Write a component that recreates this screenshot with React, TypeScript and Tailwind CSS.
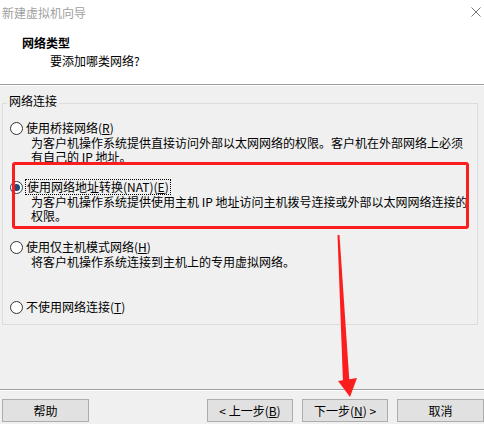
import React from "react"

const font = { fontFamily: '"Noto Sans CJK SC", "Microsoft YaHei", sans-serif' }

const Radio = ({ checked = false }: { checked?: boolean }) => (
  <svg width="13" height="13" viewBox="0 0 13 13" className="shrink-0">
    <circle cx="6.5" cy="6.5" r="6" fill="#ffffff" stroke={checked ? "#2a3d52" : "#333333"} strokeWidth="1" />
    {checked && <circle cx="6.5" cy="6.5" r="3.5" fill="#1e4d78" />}
  </svg>
)

const Option = ({
  label,
  lines = [],
  checked = false,
  focused = false,
  className = "",
}: {
  label: React.ReactNode
  lines?: string[]
  checked?: boolean
  focused?: boolean
  className?: string
}) => (
  <div className={className}>
    <div className="flex items-center h-[16px] pl-[7px]">
      <Radio checked={checked} />
      <span
        className={
          focused
            ? "ml-[2px] px-[1px] leading-[14px] border border-dotted border-black"
            : "ml-[3px] leading-[16px]"
        }
      >
        {label}
      </span>
    </div>
    {lines.map((l) => (
      <div key={l} className="pl-[28px] leading-[14px] whitespace-nowrap">
        {l}
      </div>
    ))}
  </div>
)

const Btn = ({ children, className = "" }: { children: React.ReactNode; className?: string }) => (
  <div
    className={`h-[23px] flex items-center justify-center bg-[#e1e1e1] border border-[#adadad] text-[12px] text-black ${className}`}
  >
    {children}
  </div>
)

export default function App() {
  return (
    <div className="relative w-[484px] h-[424px] bg-[#f0f0f0] overflow-hidden text-[12px] text-black" style={font}>
      {/* header */}
      <div className="h-[85px] bg-white border-b border-[#a0a0a0]">
        <div className="flex justify-between items-start pt-[6px] pl-[2px] pr-[3px]">
          <span className="leading-[14px] text-[#a0a0a0]">新建虚拟机向导</span>
          <svg width="10" height="10" viewBox="0 0 10 10" className="mt-[1px]">
            <path d="M0.5 0.5L9.5 9.5M9.5 0.5L0.5 9.5" stroke="#777" strokeWidth="1" />
          </svg>
        </div>
        <div className="mt-[16px] pl-[22px] leading-[14px] font-bold">网络类型</div>
        <div className="mt-[4px] pl-[50px] leading-[14px]">要添加哪类网络?</div>
      </div>
      <div className="h-px bg-white" />

      {/* group */}
      <fieldset className="mt-[8px] ml-[2px] w-[476px] h-[231px] border border-[#dcdcdc]">
        <legend className="ml-[4px] px-[2px] leading-[14px] pb-[4px]">网络连接</legend>
        <Option
          className="mt-[8px]"
          label={
            <>
              使用桥接网络(<span className="underline">R</span>)
            </>
          }
          lines={["为客户机操作系统提供直接访问外部以太网网络的权限。客户机在外部网络上必须", "有自己的 IP 地址。"]}
        />
        <Option
          className="mt-[15px]"
          checked
          focused
          label={
            <>
              使用网络地址转换(NAT)(<span className="underline">E</span>)
            </>
          }
          lines={["为客户机操作系统提供使用主机 IP 地址访问主机拨号连接或外部以太网网络连接的", "权限。"]}
        />
        <Option
          className="mt-[16px]"
          label={
            <>
              使用仅主机模式网络(<span className="underline">H</span>)
            </>
          }
          lines={["将客户机操作系统连接到主机上的专用虚拟网络。"]}
        />
        <Option
          className="mt-[30px]"
          label={
            <>
              不使用网络连接(<span className="underline">T</span>)
            </>
          }
        />
      </fieldset>

      {/* footer */}
      <div className="mt-[64px] border-t border-[#a0a0a0] border-b border-b-white" />
      <div className="mt-[8px] flex pl-[2px]">
        <Btn className="w-[87px]">帮助</Btn>
        <div className="ml-auto flex gap-[9px]">
          <Btn className="w-[86px]">
            &lt; 上一步(<span className="underline">B</span>)
          </Btn>
          <Btn className="w-[86px]">
            下一步(<span className="underline">N</span>) &gt;
          </Btn>
          <Btn className="w-[87px]">取消</Btn>
        </div>
      </div>

      {/* annotation: red box */}
      <div className="absolute left-[12px] top-[162px] w-[457px] h-[67px] border-[3px] border-[#fa1e1e] rounded-[3px] pointer-events-none" />

      {/* annotation: red arrow */}
      <svg className="absolute left-0 top-0 pointer-events-none" width="484" height="424" viewBox="0 0 484 424">
        <polygon points="337.5,235 339.5,235 349.5,383 343,383" fill="#fa1e1e" />
        <polygon points="338,381 357,378 350,397" fill="#fa1e1e" />
      </svg>
    </div>
  )
}
